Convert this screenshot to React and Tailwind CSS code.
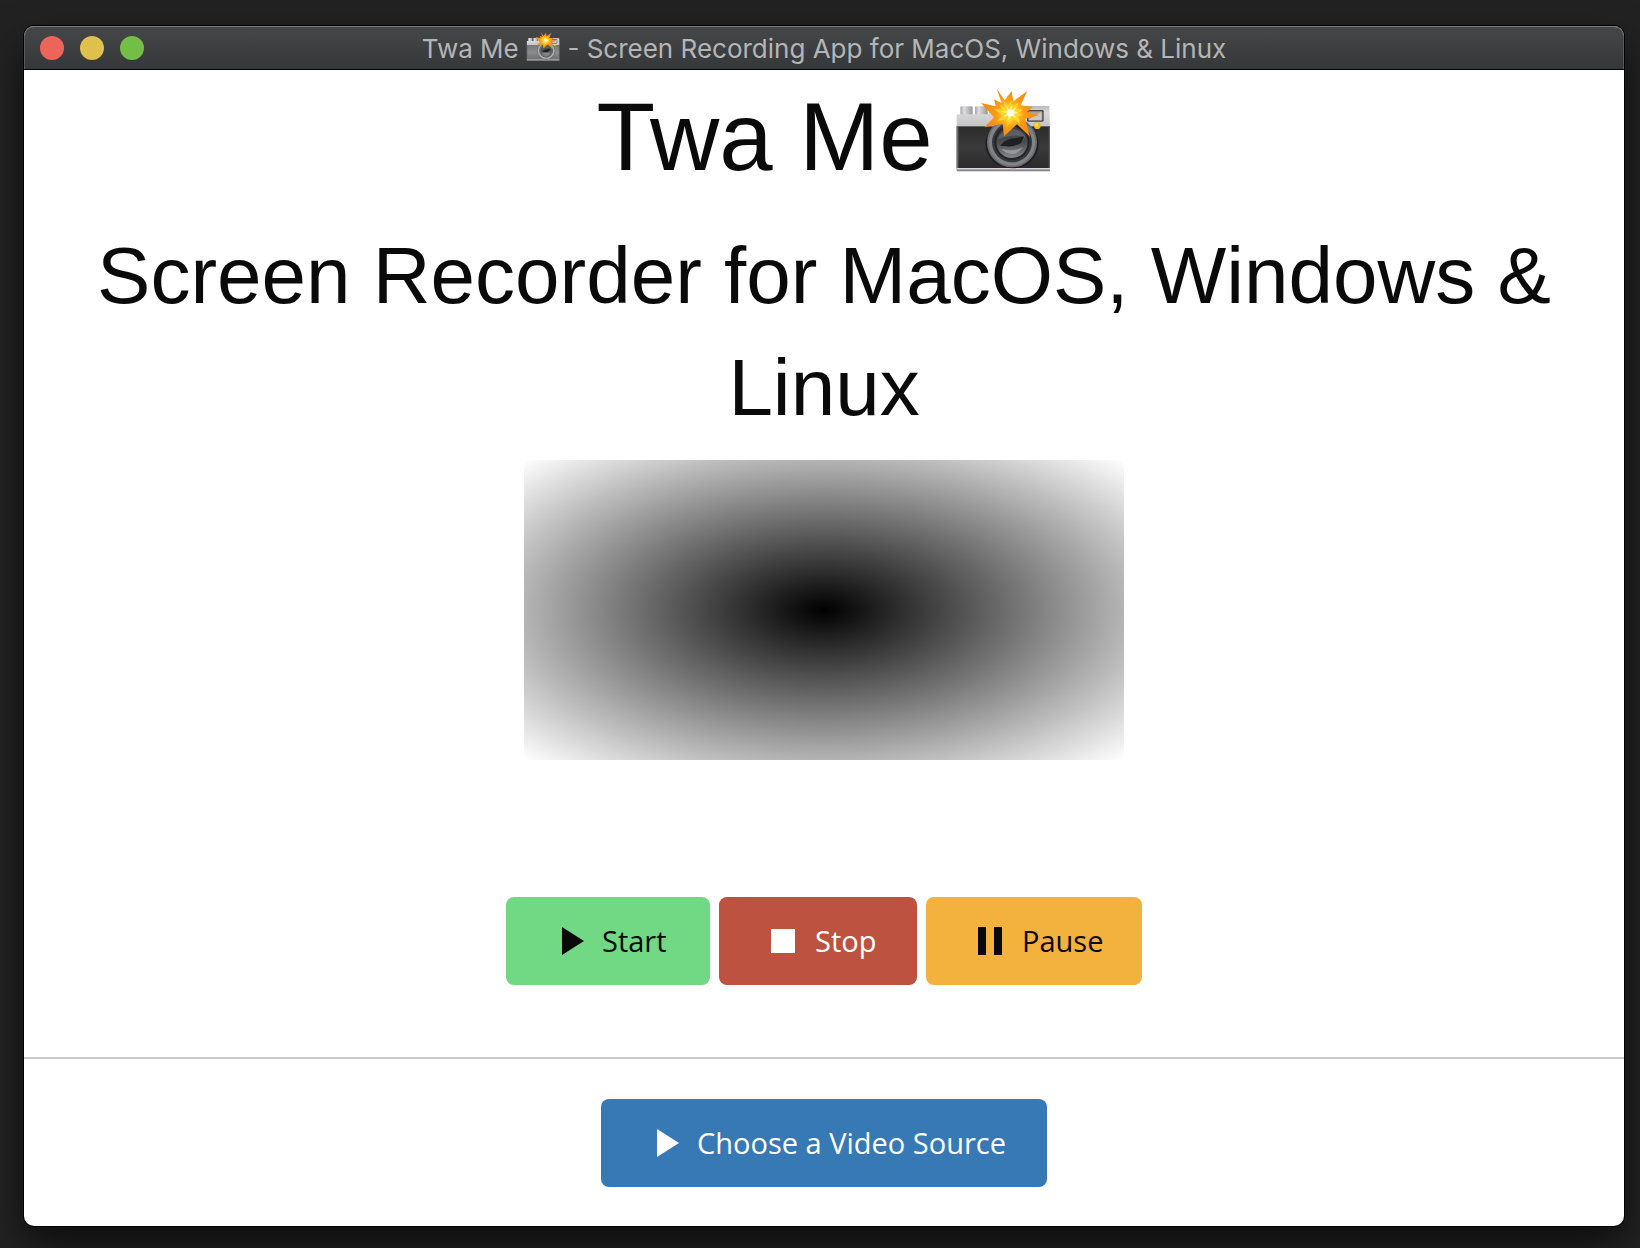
import React, { useId } from "react";

function Camera({ className, faded }) {
  const id = useId();
  const ref = (name) => `url(#${id}${name})`;
  return (
    <svg viewBox="74 50 288 258" className={className} role="img" aria-label="camera with flash">
      <defs>
        <linearGradient id={`${id}top`} x1="0" y1="0" x2="0" y2="1">
          <stop offset="0" stopColor="#b9b9bb" />
          <stop offset="0.3" stopColor="#d9d9da" />
          <stop offset="1" stopColor="#c4c4c6" />
        </linearGradient>
        <linearGradient id={`${id}knob`} x1="0" y1="0" x2="1" y2="0">
          <stop offset="0" stopColor="#a5a5a7" />
          <stop offset="0.3" stopColor="#dededf" />
          <stop offset="0.6" stopColor="#bfbfc1" />
          <stop offset="1" stopColor="#98989a" />
        </linearGradient>
        <linearGradient id={`${id}body`} x1="0" y1="0" x2="0" y2="1">
          <stop offset="0" stopColor={faded ? "#77787a" : "#2b2b2c"} />
          <stop offset="0.5" stopColor={faded ? "#8a8b8d" : "#3a3a3b"} />
          <stop offset="1" stopColor={faded ? "#6f7072" : "#2a2a2b"} />
        </linearGradient>
        <linearGradient id={`${id}lens`} x1="0" y1="0" x2="0" y2="1">
          <stop offset="0" stopColor="#3a3c3f" />
          <stop offset="0.5" stopColor="#4b4d50" />
          <stop offset="1" stopColor="#85888b" />
        </linearGradient>
        <radialGradient id={`${id}flash`} gradientUnits="userSpaceOnUse" cx="240" cy="131" r="80">
          <stop offset="0" stopColor="#ffe74a" />
          <stop offset="0.35" stopColor="#ffb91e" />
          <stop offset="0.55" stopColor="#fd9a12" />
          <stop offset="1" stopColor="#f98a0c" />
        </radialGradient>
      </defs>
      <rect x="90" y="111" width="37" height="28" rx="4" fill={ref("knob")} />
      <rect x="134" y="111" width="38" height="28" rx="4" fill={ref("knob")} />
      <path d="M176 118L190 110H357L359 172H79V137Q79 135 82 135H176Z" fill={ref("top")} />
      <rect x="79" y="171" width="280" height="126" fill={ref("body")} />
      <rect x="79" y="171" width="5" height="126" fill="#6d6d6f" />
      <rect x="355" y="171" width="4" height="126" fill="#59595b" />
      <rect x="79" y="296" width="280" height="10" fill="#8b898b" />
      <rect x="79" y="296" width="280" height="4" fill="#dad5dc" />
      <rect x="290" y="122" width="50" height="35" rx="4" fill="#454548" />
      <rect x="294" y="126" width="42" height="27" fill="#aaa39c" />
      <path d="M296 150L334 127V153H296Z" fill="#cdc6be" />
      <ellipse cx="245" cy="225" rx="80" ry="72" fill="#171718" opacity={faded ? "0.2" : "0.7"} />
      <circle cx="245" cy="219" r="75" fill={faded ? "#8a8c8f" : "#6a6c6f"} />
      <circle cx="245" cy="219" r="70" fill={faded ? "#b0b2b4" : "#808386"} />
      <circle cx="245" cy="219" r="60" fill={faded ? "#5e6063" : "#36383b"} />
      <circle cx="245" cy="219" r="53" fill={faded ? "#6e7073" : "#232426"} />
      <circle cx="245" cy="219" r="47" fill={ref("lens")} />
      <path d="M201 210Q216 178 250 179Q278 182 287 209Q270 196 246 199Q222 201 201 210Z" fill="#5d5f62" />
      <path d="M209 229Q228 205 258 206L281 201L272 221Q248 234 229 231Z" fill="#1f2022" />
      <path d="M213 238Q246 249 278 234Q264 253 246 254Q225 252 213 238Z" fill="#96989b" />
      <circle cx="321" cy="169" r="10" fill="#f5bb1d" />
      <circle cx="319" cy="167" r="5" fill="#ffdc55" />
      <path
        d="M199 58L223 93L244 65L249 96L291 65L271 108L308 113L290 128L325 138L284 148L299 202L260 165L221 201L217 163L162 174L191 144L152 101L196 111L191 90L214 101Z"
        fill={ref("flash")}
      />
      <path
        d="M216 90L232 112L242 95L247 114L266 98L258 118L278 122L264 130L276 138L263 141L270 165L249 148L230 173L228 148L198 157L216 138L190 118L217 123L208 106L226 116Z"
        fill="#ffd42e"
      />
      <path
        d="M229 108L236 121L243 108L247 121L258 112L253 126L265 130L253 135L257 147L244 139L234 154L233 139L217 144L228 132L211 125L229 125Z"
        fill="#fff37a"
      />
      <circle cx="240" cy="131" r="10" fill="#fff" />
    </svg>
  );
}

const ICONS = {
  play: "M8 5v14l11-7z",
  stop: "M6 6h12v12H6z",
  pause: "M6 19h4V5H6v14zm8-14v14h4V5h-4z",
};

function ActionButton({ icon, className, children }) {
  return (
    <button
      type="button"
      className={`flex h-[88px] items-center gap-2 whitespace-nowrap rounded-lg pl-10 font-['Open_Sans',sans-serif] text-[29px] leading-8 ${className}`}
    >
      <svg viewBox="0 0 24 24" className="size-12 shrink-0" fill="currentColor" aria-hidden="true">
        <path d={ICONS[icon]} />
      </svg>
      <span>{children}</span>
    </button>
  );
}

export default function App() {
  return (
    <div className="flex min-h-screen flex-col bg-[#222222] pt-[26px] pr-4 pb-[22px] pl-6">
      <div className="flex grow flex-col overflow-hidden rounded-[10px] bg-white shadow-[0_0_0_1px_#000,0_20px_40px_rgba(0,0,0,0.6)]">
        <header className="grid h-11 grid-cols-[1fr_auto_1fr] items-center rounded-t-[10px] border-b border-black bg-linear-to-b from-[#464749] to-[#363739] px-4 shadow-[inset_0_1px_0_#7c7d7f,inset_1px_0_0_#5a5b5d,inset_-1px_0_0_#5a5b5d]">
          <div className="flex gap-4">
            <button type="button" aria-label="Close" className="size-6 rounded-full bg-[#ed655a]" />
            <button type="button" aria-label="Minimize" className="size-6 rounded-full bg-[#e0c04c]" />
            <button type="button" aria-label="Zoom" className="size-6 rounded-full bg-[#72be47]" />
          </div>
          <div className="whitespace-nowrap font-['Inter',sans-serif] text-[26px] leading-8 text-[#b4b5b6]">
            Twa Me <Camera faded className="inline-block h-[30px] w-[34px] align-[-3px]" /> - Screen Recording App
            for MacOS, Windows &amp; Linux
          </div>
          <div />
        </header>
        <main className="flex grow flex-col text-center font-['Liberation_Sans',sans-serif] text-[#0a0a0a]">
          <h1 className="mb-4 text-[96px] leading-[134px]">
            Twa Me <Camera className="-ml-1 inline-block h-[86px] w-24 align-[-2px]" />
          </h1>
          <h2 className="mb-4 px-8 text-[80px] leading-[112px]">Screen Recorder for MacOS, Windows &amp; Linux</h2>
          <video
            aria-label="Recording preview"
            className="mx-auto h-[300px] w-[600px] max-w-full rounded-lg bg-[radial-gradient(#000,#fff)]"
          />
          <div className="mt-[137px] flex flex-wrap justify-center gap-[9px]">
            <ActionButton icon="play" className="w-[204px] bg-[#71d983] text-[#0a0a0a]">
              Start
            </ActionButton>
            <ActionButton icon="stop" className="w-[198px] bg-[#bc523f] text-white">
              Stop
            </ActionButton>
            <ActionButton icon="pause" className="w-[216px] bg-[#f3b13e] text-[#0a0a0a]">
              Pause
            </ActionButton>
          </div>
          <hr className="mt-18 border-t-2 border-[#cacaca]" />
          <div className="mt-10 mb-[38px] flex justify-center">
            <ActionButton icon="play" className="w-[446px] bg-[#3779b5] text-white">
              Choose a Video Source
            </ActionButton>
          </div>
        </main>
      </div>
    </div>
  );
}
